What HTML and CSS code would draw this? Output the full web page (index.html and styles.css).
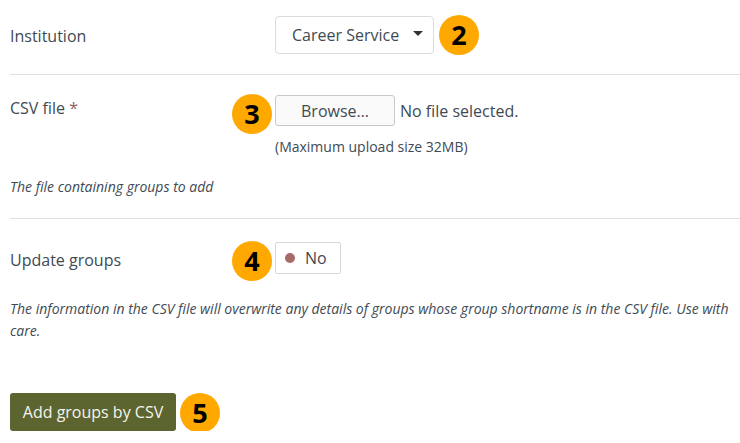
FILE: index.html
```html
<!DOCTYPE html>
<html lang="en">

<head>
    <meta charset="UTF-8">
    <title>Add groups by CSV</title>
    <link rel="stylesheet" href="styles.css">
</head>

<body>
    <form class="csv-form">
        <div class="form-row row-institution">
            <div class="form-field">
                <label class="field-label label-institution">Institution</label>
                <div class="field-control">
                    <div class="select-box">
                        <span>Career Service</span>
                        <span class="select-caret"></span>
                    </div>
                    <span class="badge badge-after">2</span>
                </div>
            </div>
        </div>

        <div class="form-row row-file">
            <div class="form-field">
                <label class="field-label label-file">CSV file <span class="required">*</span></label>
                <div class="field-control">
                    <span class="badge badge-before">3</span>
                    <div class="file-line">
                        <button type="button" class="browse-button">Browse…</button>
                        <span class="file-status">No file selected.</span>
                    </div>
                    <div class="upload-limit">(Maximum upload size 32MB)</div>
                </div>
            </div>
            <div class="field-desc desc-file">The file containing groups to add</div>
        </div>

        <div class="form-row row-update">
            <div class="form-field">
                <label class="field-label label-update">Update groups</label>
                <div class="field-control">
                    <span class="badge badge-before">4</span>
                    <div class="switch-box">
                        <span class="switch-dot"></span>
                        <span>No</span>
                    </div>
                </div>
            </div>
            <div class="field-desc desc-update">The information in the CSV file will overwrite any details of groups whose group shortname is in the CSV file. Use with care.</div>
        </div>

        <div class="submit-line">
            <button type="button" class="submit-button">Add groups by CSV</button>
            <span class="badge badge-after">5</span>
        </div>
    </form>
</body>

</html>
```

FILE: styles.css
```css
* {
    margin: 0;
    padding: 0;
    box-sizing: border-box;
}

body {
    background: #fff;
    color: #404a54;
    font-family: "Open Sans", sans-serif;
    font-size: 16px;
    overflow: hidden;
}

.csv-form {
    padding-left: 10px;
}

.form-row {
    border-bottom: 1px solid #e0e0e0;
}

.row-institution {
    padding: 16px 0 20px;
}

.row-file {
    padding: 20px 0 20px;
}

.row-update {
    padding: 23px 0 0;
    border-bottom: none;
}

.form-field {
    display: flex;
}

.field-label {
    width: 265px;
}

.label-institution {
    height: 38px;
    line-height: 40px;
}

.label-file {
    line-height: 26px;
}

.label-update {
    line-height: 36px;
}

.required {
    color: #8f5f5a;
}

.field-control {
    position: relative;
}

.badge {
    position: absolute;
    width: 40px;
    height: 40px;
    border-radius: 50%;
    background: #ffa800;
    color: #000;
    font-size: 27px;
    font-weight: 700;
    line-height: 40px;
    text-align: center;
}

.badge-before {
    left: -43px;
    top: -1px;
}

.badge-after {
    left: 164px;
    top: -1px;
}

.select-box {
    display: flex;
    align-items: center;
    width: 159px;
    height: 38px;
    padding-left: 16px;
    border: 1px solid #dcdcdc;
    border-radius: 4px;
}

.select-caret {
    margin: -4px 0 0 14px;
    border-top: 5px solid #333;
    border-left: 5px solid transparent;
    border-right: 5px solid transparent;
}

.file-line {
    display: flex;
    align-items: center;
}

.browse-button {
    width: 120px;
    height: 31px;
    background: #fafafa;
    border: 1px solid #c8c8c8;
    border-radius: 3px;
    color: #404a54;
    font-family: inherit;
    font-size: 16px;
}

.file-status {
    margin-left: 5px;
}

.upload-limit {
    margin-top: 11px;
    font-size: 14px;
    line-height: 19px;
}

.field-desc {
    font-size: 14px;
    font-style: italic;
    line-height: 22px;
}

.desc-file {
    margin-top: 20px;
}

.desc-update {
    margin-top: 20px;
}

.switch-box {
    display: flex;
    align-items: center;
    width: 66px;
    height: 32px;
    padding-left: 9px;
    border: 1px solid #d8d8d8;
    border-radius: 2px;
}

.switch-dot {
    width: 10px;
    height: 10px;
    margin-right: 10px;
    border-radius: 50%;
    background: #a86a66;
}

.submit-line {
    position: relative;
    margin-top: 51px;
}

.submit-button {
    display: block;
    width: 166px;
    height: 38px;
    background: #5c6430;
    border: none;
    border-radius: 3px;
    color: #f4f4ec;
    font-family: inherit;
    font-size: 16px;
}

.submit-line .badge-after {
    left: 170px;
    top: 0;
}
```
